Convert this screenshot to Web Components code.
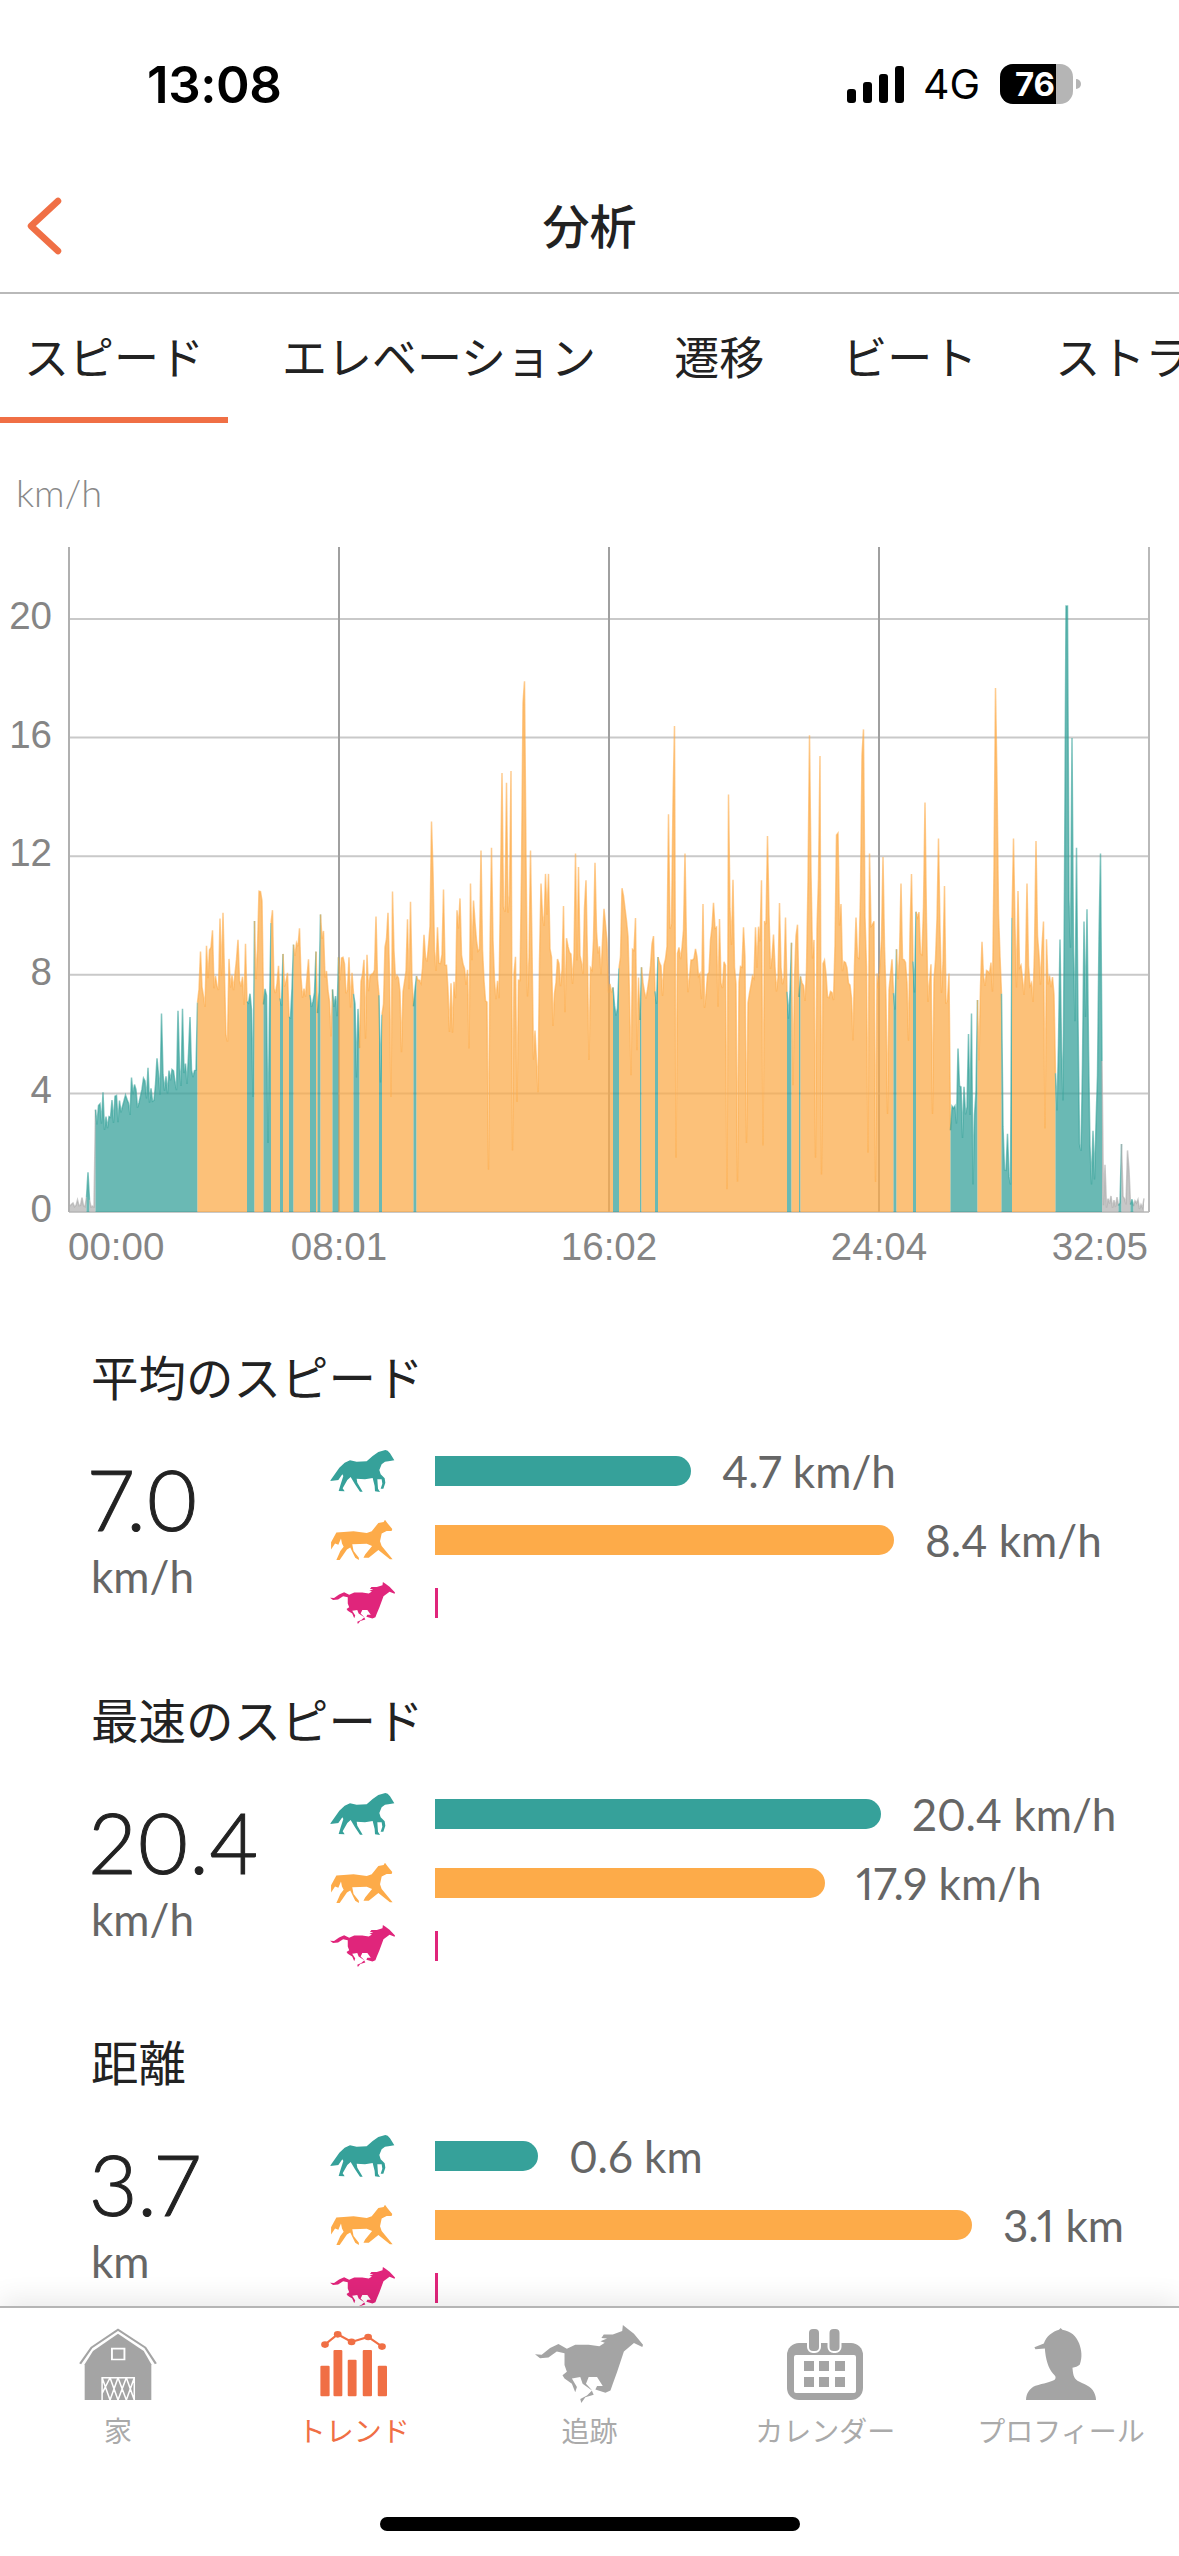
<!DOCTYPE html>
<html lang="ja">
<head>
<meta charset="utf-8">
<title>分析</title>
<style>
  html, body { margin: 0; padding: 0; background: #fff; }
  body { font-family: "Liberation Sans", "Noto Sans CJK JP", sans-serif; }
</style>
</head>
<body>
<app-screen>
  <status-bar></status-bar>
  <nav-header>分析</nav-header>
  <tab-strip>
    <tab-item active>スピード</tab-item>
    <tab-item>エレベーション</tab-item>
    <tab-item>遷移</tab-item>
    <tab-item>ビート</tab-item>
    <tab-item>ストライド</tab-item>
  </tab-strip>
  <scroll-area>
    <speed-chart></speed-chart>
    <stat-block heading="平均のスピード" value="7.0" unit="km/h" style="margin-top:80px">
      <stat-row gait="walk" width="256">4.7 km/h</stat-row>
      <stat-row gait="trot" width="459">8.4 km/h</stat-row>
      <stat-row gait="gallop" width="3"></stat-row>
    </stat-block>
    <stat-block heading="最速のスピード" value="20.4" unit="km/h">
      <stat-row gait="walk" width="446">20.4 km/h</stat-row>
      <stat-row gait="trot" width="390">17.9 km/h</stat-row>
      <stat-row gait="gallop" width="3"></stat-row>
    </stat-block>
    <stat-block heading="距離" value="3.7" unit="km">
      <stat-row gait="walk" width="103">0.6 km</stat-row>
      <stat-row gait="trot" width="537">3.1 km</stat-row>
      <stat-row gait="gallop" width="3"></stat-row>
    </stat-block>
  </scroll-area>
  <bottom-nav>
    <nav-item icon="barn">家</nav-item>
    <nav-item icon="trend" active>トレンド</nav-item>
    <nav-item icon="horse">追跡</nav-item>
    <nav-item icon="calendar">カレンダー</nav-item>
    <nav-item icon="profile">プロフィール</nav-item>
  </bottom-nav>
</app-screen>

<script>
const ACCENT = "#f06f45";
const FONT = `"Liberation Sans", "Noto Sans CJK JP", sans-serif`;
const NUM_FONT = `Lato, "Noto Sans CJK JP", sans-serif`;

// horse outlines, traced from the reference
const WALK_HORSE = `<svg viewBox="60 62 195 126" width="65" height="42"><path fill="currentColor" d="M253 93L240 72L233 64L226 62L205 68L188 80L170 96L140 97L120 93L104 100L88 115L60 155L85 152L97 135L100 140L92 165L86 185L104 186L98 177L112 152L122 143L135 165L150 187L158 187L142 160L140 148L165 150L188 146L194 170L195 186L210 188L204 178L202 150L215 150L217 163L212 178L220 178L226 160L224 147L212 135L208 122L215 105L225 97L240 95Z"/></svg>`;
const TROT_HORSE = `<svg viewBox="60 268 188 127" width="63" height="42"><path fill="currentColor" d="M247 298L232 280L225 270L221 277L205 280L185 305L170 310L130 305L100 307L78 309L62 338L62 360L74 342L84 346L92 327L95 342L100 352L90 365L78 392L88 392L110 360L120 354L135 385L146 392L146 385L130 365L126 344L170 343L186 350L165 375L160 385L176 385L205 362L240 390L248 390L215 350L210 335L215 312L230 304L245 304Z"/></svg>`;
const GALLOP_PATH = "M352 90L325 58L305 42L292 32L290 50L262 60L235 60L228 70L245 72L225 80L238 84L222 95L190 90L150 90L125 102L100 88L75 100L50 120L30 118L45 130L70 128L95 110L118 115L118 150L125 170L112 180L118 190L140 205L150 230L155 215L140 190L165 185L172 205L200 225L185 240L165 250L168 262L180 245L205 238L198 222L182 205L190 185L215 185L232 212L215 212L210 222L240 232L255 225L262 205L275 170L295 110L325 85L350 97Z";
const GALLOP_HORSE = `<svg viewBox="30 32 322 230" width="65" height="42" preserveAspectRatio="none"><path fill="currentColor" d="${GALLOP_PATH}"/></svg>`;

const GAITS = {
  walk: { color: "#36a19a", icon: WALK_HORSE },
  trot: { color: "#fdab49", icon: TROT_HORSE },
  gallop: { color: "#e0257b", icon: GALLOP_HORSE },
};

class AppScreen extends HTMLElement {
  constructor() {
    super();
    this.attachShadow({ mode: "open" });
    this.shadowRoot.innerHTML = `
      <style>
        :host { display: flex; flex-direction: column; width: 1179px; height: 2556px; overflow: hidden; background: #fff; color: #222; font-family: ${FONT}; }
      </style>
      <slot></slot>`;
  }
}

class StatusBar extends HTMLElement {
  constructor() {
    super();
    this.attachShadow({ mode: "open" });
    this.shadowRoot.innerHTML = `
      <style>
        :host { display: flex; align-items: center; height: 160px; padding: 8px 98px 0 147px; box-sizing: border-box; color: #000; }
        .time { font: 600 51px Inter, sans-serif; letter-spacing: -.4px; flex: 1; }
        .bars { display: flex; align-items: flex-end; gap: 7px; height: 37px; }
        .bars i { display: block; width: 9px; border-radius: 3px; background: #000; }
        .net { font: 400 41px Inter, sans-serif; margin: 0 20px 0 19px; }
        .battery { position: relative; display: flex; width: 73px; height: 40px; border-radius: 13px; overflow: hidden; background: #b5b5b5; }
        .level { width: 56px; background: #000; color: #fff; font: 700 33px Inter, sans-serif; text-align: right; line-height: 40px; padding-right: 1px; box-sizing: border-box; }
        .tip { width: 5px; height: 10px; margin-left: 3px; border-radius: 0 5px 5px 0; background: #b5b5b5; }
      </style>
      <span class="time">13:08</span>
      <span class="bars"><i style="height:14px"></i><i style="height:21px"></i><i style="height:29px"></i><i style="height:37px"></i></span>
      <span class="net">4G</span>
      <span class="battery"><span class="level">76</span></span>
      <span class="tip"></span>`;
  }
}

class NavHeader extends HTMLElement {
  constructor() {
    super();
    this.attachShadow({ mode: "open" });
    this.shadowRoot.innerHTML = `
      <style>
        :host { position: relative; display: flex; align-items: center; justify-content: center; height: 134px; padding-bottom: 6px; box-sizing: border-box; border-bottom: 2px solid #b9b9b9; font-size: 47px; font-weight: 500; color: #222; }
        svg { position: absolute; left: 27px; top: 36px; }
      </style>
      <svg width="38" height="60" viewBox="0 0 38 60"><path d="M31 5L4 30L31 55" fill="none" stroke="${ACCENT}" stroke-width="6.500" stroke-linecap="round" stroke-linejoin="round"/></svg>
      <slot></slot>`;
  }
}

class TabStrip extends HTMLElement {
  constructor() {
    super();
    this.attachShadow({ mode: "open" });
    this.shadowRoot.innerHTML = `
      <style>
        :host { display: flex; gap: 30px; height: 129px; overflow: hidden; white-space: nowrap; }
      </style>
      <slot></slot>`;
  }
}

class TabItem extends HTMLElement {
  constructor() {
    super();
    this.attachShadow({ mode: "open" });
    this.shadowRoot.innerHTML = `
      <style>
        :host { display: flex; align-items: center; flex: none; padding: 0 24px 6px; height: 129px; box-sizing: border-box; font-size: 45px; color: #222; }
        :host([active]) { border-bottom: 6px solid ${ACCENT}; padding-bottom: 0; }
      </style>
      <slot></slot>`;
  }
}

class ScrollArea extends HTMLElement {
  constructor() {
    super();
    this.attachShadow({ mode: "open" });
    this.shadowRoot.innerHTML = `
      <style>
        :host { display: block; flex: 1; min-height: 0; overflow: hidden; }
      </style>
      <slot></slot>`;
  }
}

class SpeedChart extends HTMLElement {
  constructor() {
    super();
    this.attachShadow({ mode: "open" });
    this.shadowRoot.innerHTML = `
      <style>
        :host { display: block; }
        .unit { height: 117px; padding: 48px 0 0 16px; box-sizing: border-box; font: 300 38px/42px ${NUM_FONT}; color: #888; }
        svg { display: block; }
        text { font: 38.500px "Liberation Sans", sans-serif; fill: #858585; }
      </style>
      <div class="unit">km/h</div>
      ${this.renderChart()}`;
  }

  // seeded so the trace comes out the same on every load
  series() {
    let seed = 20240;
    const rand = () => {
      seed = (seed * 16807) % 2147483647;
      return seed / 2147483647;
    };
    const tealStripes = [[247, 253], [263, 270], [280, 281.5], [288, 293], [310, 315], [317, 320], [332, 338], [353, 358], [379, 381], [413, 416], [613, 618], [639, 640.5], [655, 657], [787, 790], [798, 800], [893, 896], [912, 915], [950, 976], [1001, 1011], [1055, 1101], [1118, 1120], [1130, 1133]];
    const points = [];
    let carry = 0;
    let burst = 0;
    let burstAmp = 0;
    for (let x = 70; x <= 1144; x += 1.5) {
      let state = "trot";
      if (x < 95 || x > 1101) state = "idle";
      else if (x < 197) state = "walk";
      if (x > 86 && x < 88.5) state = "walk";
      if (tealStripes.some(([a, b]) => x >= a && x <= b)) state = "walk";

      let v;
      const r = rand();
      if (x < 95) v = 0.15 + r * 0.35;
      else if (x < 197) v = 3.1 + ((x - 95) / 102) * 1.9 + (r - 0.5) * 1.1;
      else if (x >= 950 && x <= 976) v = 2.2 + r * 2.4;
      else if (x >= 1001 && x <= 1011) v = 1 + r * 2;
      else if (x >= 1055 && x <= 1101) v = Math.max(0.6, 4.4 - ((x - 1055) / 46) * 2.6 + (r - 0.5) * 2.4);
      else if (x > 1101) v = 0.1 + r * 0.45;
      else if (state === "walk") v = 6.4 + r * 1.2;
      else {
        // mostly 7-8.5 km/h, with short humps and the odd dip
        carry = carry * 0.45 + (r - 0.5) * 1.5;
        v = 7.9 + carry;
        if (burst > 0) {
          v += burstAmp;
          burst--;
        } else if (rand() < (x < 420 ? 0.05 : 0.09)) {
          burst = 2 + Math.floor(rand() * 4);
          burstAmp = 0.6 + rand() * 1.8;
        }
        if (rand() < 0.1) v -= 0.8 + rand() * 2.2;
      }
      points.push({ x, v, state });
    }

    // [zoomX, zoomY] of the peaks and dips read off the two crops of the chart
    const left = [[228, 1345], [267, 1180], [345, 1150], [388, 1130], [410, 1110], [423, 1018], [466, 1012], [477, 1008], [498, 1025], [515, 995], [1126, 622], [1310, 522], [1323, 542], [1333, 518], [1369, 333], [1365, 378], [1385, 682], [1256, 682], [1284, 676], [1502, 688], [1510, 716], [1555, 708], [1023, 766], [1130, 725], [1158, 762], [982, 818], [1012, 810], [1228, 750], [1238, 785], [1412, 750], [1423, 730], [1433, 730], [1470, 796], [583, 810], [575, 822], [623, 866], [775, 872], [737, 895], [672, 885], [522, 890], [540, 878], [885, 902], [895, 902], [910, 902], [1275, 1340], [1337, 1300], [1224, 1090], [1020, 1190], [1348, 1200], [1405, 1180], [1400, 1115], [700, 1285], [660, 1190], [930, 1150], [995, 1160]];
    const right = [[247, 425], [230, 607], [243, 583], [273, 688], [389, 566], [401, 742], [492, 652], [475, 743], [602, 444], [628, 487], [672, 650], [677, 646], [742, 432], [738, 485], [758, 688], [795, 695], [840, 750], [869, 730], [903, 583], [940, 657], [953, 755], [1086, 347], [1093, 540], [1133, 657], [1145, 765], [1195, 662], [1217, 652], [1170, 750], [1272, 178], [1276, 178], [1286, 450], [1301, 676], [1327, 803], [1361, 688], [1357, 860], [1321, 828], [1256, 865], [1105, 977], [1025, 1018], [1017, 1060], [990, 1090], [15, 743], [39, 707], [10, 800], [141, 888], [522, 790], [565, 858], [322, 792], [365, 823], [429, 840], [459, 840], [505, 855], [640, 908], [685, 792], [722, 820], [1051, 870], [252, 1315], [385, 1380], [412, 1365], [437, 1285], [478, 1290], [615, 1315], [632, 1350], [752, 1305], [775, 1365], [805, 1225], [923, 1225], [1217, 1255], [1113, 1340], [1028, 1370], [1340, 1370], [1125, 1370], [1375, 1330], [1418, 1287], [1433, 1300], [1438, 1340]];
    const setPeak = (x, zy) => {
      const i = Math.round((x - 70) / 1.5);
      if (!points[i]) return;
      const v = (1427 - zy) * 0.01636;
      // give a tall peak a bit of shoulder, as the trace has
      if (v > 9) {
        [i - 1, i + 1].forEach((n) => {
          if (points[n]) points[n].v = Math.max(points[n].v, (points[n].v + v) / 2 - 1);
        });
      }
      points[i].v = v;
    };
    left.forEach(([zx, zy]) => setPeak(zx * 0.383, zy));
    right.forEach(([zx, zy]) => setPeak(580 + zx * 0.382, zy));
    return points;
  }

  renderChart() {
    const toY = (v) => (1212 - v * 29.65).toFixed(1);
    const colors = {
      walk: ["#36a19a", "#36a19a"],
      trot: ["#fbab4a", "#fdab49"],
      idle: ["#b4b4b4", "#a8a8a8"],
    };
    const points = this.series();
    const runs = [];
    points.forEach((p) => {
      const last = runs[runs.length - 1];
      if (last && last.state === p.state) last.pts.push(p);
      else {
        if (last) last.pts.push({ x: p.x, v: p.v });
        runs.push({ state: p.state, pts: [p] });
      }
    });
    const areas = runs.map(({ state, pts }) => {
      const line = pts.map((p) => `${p.x} ${toY(p.v)}`).join("L");
      const [fill, stroke] = colors[state];
      return `<path d="M${pts[0].x} 1212L${line}L${pts[pts.length - 1].x} 1212Z" fill="${fill}" fill-opacity=".74"/>
        <path d="M${line}" fill="none" stroke="${stroke}" stroke-opacity=".6" stroke-width="1.500"/>`;
    }).join("");

    const grid = [0, 4, 8, 12, 16, 20].map((v) => {
      const y = toY(v);
      return `<line x1="69" x2="1149" y1="${y}" y2="${y}" stroke="#c9c9c9" stroke-width="2"/>
        <text x="52" y="${Number(y) + 10}" text-anchor="end">${v}</text>`;
    }).join("");
    const verticals = [[69, "#b0b0b0"], [339, "#a0a0a0"], [609, "#a0a0a0"], [879, "#a0a0a0"], [1149, "#b9b9b9"]]
      .map(([x, c]) => `<line x1="${x}" x2="${x}" y1="547" y2="1212" stroke="${c}" stroke-width="2"/>`).join("");
    const labels = [[68, "start", "00:00"], [339, "middle", "08:01"], [609, "middle", "16:02"], [879, "middle", "24:04"], [1148, "end", "32:05"]]
      .map(([x, a, t]) => `<text x="${x}" y="1260" text-anchor="${a}">${t}</text>`).join("");

    return `<svg width="1179" height="730" viewBox="0 540 1179 730">${grid}${verticals}${areas}${labels}</svg>`;
  }
}

class StatBlock extends HTMLElement {
  constructor() {
    super();
    this.attachShadow({ mode: "open" });
    this.shadowRoot.innerHTML = `
      <style>
        :host { display: block; height: 342.5px; padding-left: 91px; box-sizing: border-box; }
        h3 { margin: 0 0 40px; height: 60px; font-size: 47.5px; line-height: 60px; font-weight: 400; color: #222; }
        .body { display: flex; }
        .total { width: 239px; flex: none; padding-top: 1px; }
        .value { font: 300 84px/96px ${NUM_FONT}; font-variant-numeric: proportional-nums; -webkit-text-stroke: 1px #222; color: #222; margin-left: -2px; }
        .unit { margin-top: 4px; font: 44px/50px ${NUM_FONT}; color: #666; }
        .rows { display: flex; flex-direction: column; gap: 21px; }
        ::slotted(:first-child) { margin-bottom: 6px; }
      </style>
      <h3>${this.getAttribute("heading")}</h3>
      <div class="body">
        <div class="total">
          <div class="value">${this.getAttribute("value")}</div>
          <div class="unit">${this.getAttribute("unit")}</div>
        </div>
        <div class="rows"><slot></slot></div>
      </div>`;
  }
}

class StatRow extends HTMLElement {
  constructor() {
    super();
    this.attachShadow({ mode: "open" });
    const gait = GAITS[this.getAttribute("gait")];
    const width = this.getAttribute("width");
    this.shadowRoot.innerHTML = `
      <style>
        :host { display: flex; align-items: center; height: 42px; font: 44px ${NUM_FONT}; font-variant-numeric: proportional-nums; color: #666; white-space: nowrap; }
        .icon { width: 105px; flex: none; display: flex; color: ${gait.color}; }
        .bar { height: 30px; width: ${width}px; background: ${gait.color}; border-radius: ${width > 15 ? "0 15px 15px 0" : "0"}; margin-right: 31px; }
      </style>
      <span class="icon">${gait.icon}</span>
      <span class="bar"></span>
      <slot></slot>`;
  }
}

class BottomNav extends HTMLElement {
  constructor() {
    super();
    this.attachShadow({ mode: "open" });
    this.shadowRoot.innerHTML = `
      <style>
        :host { position: relative; display: grid; grid-template-columns: repeat(5, 1fr); flex: none; height: 250px; box-sizing: border-box; padding-top: 14px; background: #fff; border-top: 2px solid #b5b5b5; box-shadow: 0 -6px 26px rgba(0, 0, 0, .09); }
        .home { position: absolute; left: 380px; top: 209px; width: 420px; height: 14px; border-radius: 7px; background: #000; }
      </style>
      <slot></slot>
      <div class="home"></div>`;
  }
}

const NAV_ICONS = {
  barn: `<svg width="78" height="72" viewBox="205 113 206 217" preserveAspectRatio="none">
    <path d="M208 221L238 172L308 118L380 172L408 221" fill="none" stroke="currentColor" stroke-width="6"/>
    <path d="M220 330V222L242 182L308 130L376 182L396 222V330Z" fill="currentColor"/>
    <path d="M292 175H325V208H292Z" fill="none" stroke="#fff" stroke-width="5"/>
    <path d="M266 330V263H351V330M266 263L287 330M287 263L266 310M287 263L308 330M308 263L287 330M308 263L330 330M330 263L308 330M330 263L351 330M351 263L330 330" fill="none" stroke="#fff" stroke-width="4"/>
  </svg>`,
  trend: `<svg width="67" height="68" viewBox="835 120 174 205" preserveAspectRatio="none" fill="currentColor">
    <rect x="836" y="228" width="24" height="92" rx="3"/><rect x="870" y="180" width="23" height="140" rx="3"/><rect x="907" y="210" width="23" height="110" rx="3"/><rect x="946" y="180" width="24" height="140" rx="3"/><rect x="985" y="228" width="24" height="92" rx="3"/>
    <path d="M848 164L881 133L917 156L960 141L996 170" fill="none" stroke="currentColor" stroke-width="6"/>
    <circle cx="848" cy="164" r="10"/><circle cx="881" cy="133" r="10"/><circle cx="917" cy="156" r="10"/><circle cx="960" cy="141" r="10"/><circle cx="996" cy="170" r="10"/>
  </svg>`,
  horse: `<svg width="108" height="78" viewBox="30 32 322 230" preserveAspectRatio="none"><path fill="currentColor" d="${GALLOP_PATH}"/></svg>`,
  calendar: `<svg width="76" height="72" viewBox="0 0 76 72">
    <rect x="0" y="15" width="76" height="57" rx="12" fill="currentColor"/>
    <rect x="7" y="27" width="62" height="38" rx="2" fill="#fff"/>
    <rect x="21" y="0" width="12" height="24" rx="5" fill="currentColor" stroke="#fff" stroke-width="2"/>
    <rect x="41.500" y="0" width="12" height="24" rx="5" fill="currentColor" stroke="#fff" stroke-width="2"/>
    <g fill="currentColor"><rect x="17" y="33" width="10" height="10"/><rect x="32" y="33" width="10" height="10"/><rect x="48" y="33" width="10" height="10"/><rect x="17" y="49" width="10" height="10"/><rect x="32" y="49" width="10" height="10"/><rect x="48" y="49" width="10" height="10"/></g>
  </svg>`,
  profile: `<svg width="70" height="72" viewBox="32 38 208 217" preserveAspectRatio="none"><path fill="currentColor" d="M32 255C33 235 42 220 60 212C85 204 105 202 118 193C122 187 120 182 112 175C98 160 90 130 88 100L60 102L57 96L85 85C92 62 112 48 130 43L135 38L140 43C165 47 182 62 190 85C197 105 200 125 192 148C186 155 178 155 170 158C172 175 172 188 185 197C205 208 225 212 234 232C238 240 240 248 240 255Z"/></svg>`,
};

class NavItem extends HTMLElement {
  constructor() {
    super();
    this.attachShadow({ mode: "open" });
    this.shadowRoot.innerHTML = `
      <style>
        :host { display: flex; flex-direction: column; align-items: center; font-size: 28px; line-height: 36px; color: #aaa; }
        :host([active]) { color: ${ACCENT}; }
        .icon { display: flex; align-items: center; height: 84px; color: #a4a4a4; }
        :host([active]) .icon { color: ${ACCENT}; }
        .label { margin-top: 9px; }
      </style>
      <span class="icon">${NAV_ICONS[this.getAttribute("icon")]}</span>
      <span class="label"><slot></slot></span>`;
  }
}

customElements.define("app-screen", AppScreen);
customElements.define("status-bar", StatusBar);
customElements.define("nav-header", NavHeader);
customElements.define("tab-strip", TabStrip);
customElements.define("tab-item", TabItem);
customElements.define("scroll-area", ScrollArea);
customElements.define("speed-chart", SpeedChart);
customElements.define("stat-block", StatBlock);
customElements.define("stat-row", StatRow);
customElements.define("bottom-nav", BottomNav);
customElements.define("nav-item", NavItem);
</script>
</body>
</html>
